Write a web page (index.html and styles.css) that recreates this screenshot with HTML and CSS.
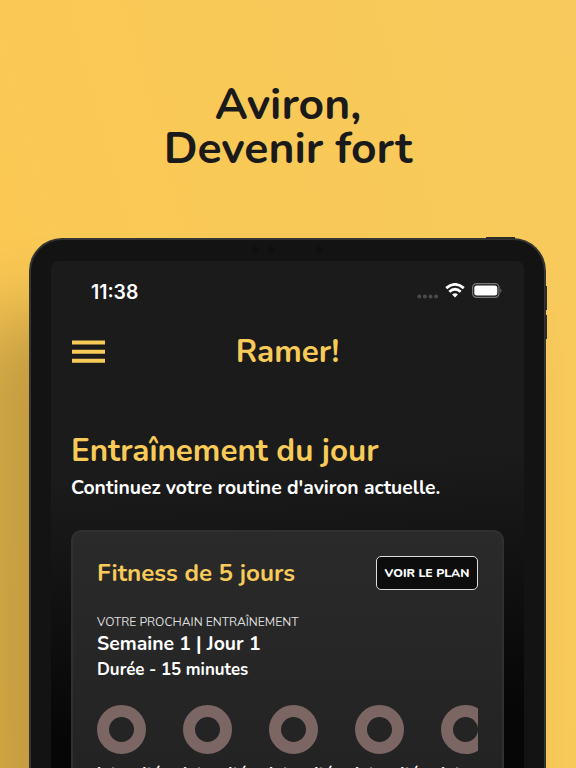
FILE: index.html
```html
<!DOCTYPE html>
<html lang="fr">
<head>
  <meta charset="UTF-8" />
  <meta name="viewport" content="width=device-width, initial-scale=1" />
  <title>Ramer! - Aviron, Devenir fort</title>
  <link rel="stylesheet" href="styles.css">
</head>
<body>
  <h1 class="headline">Aviron,<br>Devenir fort</h1>

  <div class="tablet">
    <span class="key key-power"></span>
    <span class="key key-up"></span>
    <span class="key key-down"></span>
    <span class="sensors"><i></i><i></i><i></i></span>

    <div class="screen">
      <div class="status">
        <span class="time">11:38</span>
        <div class="status-icons">
          <svg class="dots" width="22" height="5" viewBox="0 0 22 5">
            <circle cx="2.3" cy="2.5" r="2" /><circle cx="7.9" cy="2.5" r="2" /><circle cx="13.5" cy="2.5" r="2" /><circle cx="19.1" cy="2.5" r="2" />
          </svg>
          <svg class="wifi" width="20" height="15" viewBox="0 0 20 15">
            <path d="M1.2 5.1 Q10 -2.3 18.8 5.1" />
            <path d="M4.3 8.7 Q10 3.8 15.7 8.7" />
            <path class="wifi-dot" d="M7.1 11.4 Q10 9 12.9 11.4 L10 14.6 Z" />
          </svg>
          <svg class="battery" width="31" height="15" viewBox="0 0 31 15">
            <rect class="battery-case" x=".6" y=".6" width="26.4" height="13.8" rx="4" />
            <rect class="battery-fill" x="2.3" y="2.4" width="23" height="10.2" rx="2.5" />
            <path class="battery-tip" d="M28.4 5.2 Q30.6 7.5 28.4 9.8 Z" />
          </svg>
        </div>
      </div>

      <header>
        <svg class="menu" width="33" height="23" viewBox="0 0 33 23">
          <path d="M0 2.5H33M0 11.7H33M0 20.8H33" />
        </svg>
        <span class="brand">Ramer!</span>
      </header>

      <main>
        <h2>Entraînement du jour</h2>
        <p class="intro">Continuez votre routine d'aviron actuelle.</p>

        <section class="card">
          <div class="card-head">
            <h3>Fitness de 5 jours</h3>
            <button type="button">VOIR LE PLAN</button>
          </div>
          <p class="next">VOTRE PROCHAIN ENTRAÎNEMENT</p>
          <p class="session">Semaine 1 | Jour 1</p>
          <p class="duration">Durée - 15 minutes</p>
          <div class="steps">
            <div class="step"><span class="ring"></span><span class="step-label">intensité</span></div>
            <div class="step"><span class="ring"></span><span class="step-label">intensité</span></div>
            <div class="step"><span class="ring"></span><span class="step-label">intensité</span></div>
            <div class="step"><span class="ring"></span><span class="step-label">intensité</span></div>
            <div class="step"><span class="ring"></span><span class="step-label">intensité</span></div>
          </div>
        </section>
      </main>
    </div>
  </div>
</body>
</html>
```

FILE: styles.css
```css
:root {
  --yellow: #f8cb59;
  --ink: #1a1a1a;
  --white: #ffffff;
  --ring: #7b6664;
}
* {
  box-sizing: border-box;
}
body {
  margin: 0;
  height: 768px;
  overflow: hidden;
  font-family: Nunito, 'Open Sans', sans-serif;
  font-weight: 700;
  color: var(--white);
  background: linear-gradient(75deg, #fcc852, #f6ca5c);
}
h1, h2, h3, p {
  margin: 0;
}
.headline {
  height: 238px;
  padding-top: 83px;
  text-align: center;
  font-size: 44.5px;
  line-height: 43.5px;
  font-weight: 700;
  color: var(--ink);
  white-space: nowrap;
}
.tablet {
  position: relative;
  width: 517px;
  height: 530px;
  margin-left: 29px;
  padding: 21px 20px 0;
  border: 2px solid #343532;
  border-bottom: 0;
  border-radius: 33px 33px 0 0;
  background: #131313;
  box-shadow: -60px 78px 80px 0 rgba(0, 0, 0, 0.23);
}
.key {
  position: absolute;
  background: #292a29;
}
.key-power {
  top: -3px;
  right: 29px;
  width: 29px;
  height: 2px;
}
.key-up,
.key-down {
  right: -3px;
  width: 2px;
  height: 24px;
}
.key-up {
  top: 46px;
}
.key-down {
  top: 75px;
}
.sensors {
  position: absolute;
  top: 6px;
  left: 220px;
  display: flex;
  gap: 8px;
}
.sensors i {
  width: 8px;
  height: 8px;
  border-radius: 50%;
  background: #101010;
}
.sensors i:last-child {
  margin-left: 32px;
}
.screen {
  height: 507px;
  padding: 0 20px;
  border-radius: 8px 8px 0 0;
  background: linear-gradient(176deg, #1b1b1b 0, #1b1b1b 220px, #060606 480px);
}
.status {
  display: flex;
  justify-content: space-between;
  height: 60px;
  padding: 18px 1px 0 20px;
}
.time {
  padding-top: 1px;
  font-family: Inter, sans-serif;
  font-size: 19.4px;
  line-height: 25px;
  font-weight: 600;
}
.status-icons {
  display: flex;
  padding-top: 4px;
}
.dots {
  margin: 11px 6px 0 0;
  fill: #4b4b4b;
}
.wifi {
  margin-right: 7px;
  fill: none;
  stroke: var(--white);
  stroke-width: 2.8;
}
.wifi .wifi-dot {
  fill: var(--white);
  stroke: none;
}
.battery-case {
  fill: none;
  stroke: #777;
  stroke-width: 1.2;
}
.battery-fill {
  fill: var(--white);
}
.battery-tip {
  fill: #777;
}
header {
  display: grid;
  grid-template-columns: 33px 1fr 33px;
  align-items: center;
  height: 60px;
  padding: 0 1px;
}
.menu {
  stroke: var(--yellow);
  stroke-width: 4;
}
.brand {
  padding-top: 1px;
  text-align: center;
  font-size: 31.4px;
  line-height: 40px;
  color: var(--yellow);
}
main {
  padding-top: 48px;
  white-space: nowrap;
}
h2 {
  padding-top: 1px;
  font-size: 31.4px;
  line-height: 41px;
  color: var(--yellow);
}
.intro {
  height: 58px;
  padding-top: 3px;
  font-size: 19.35px;
  line-height: 28px;
}
.card {
  height: 239px;
  margin-top: 1px;
  padding: 24px 24px 0;
  border: 2px solid #303030;
  border-bottom: 0;
  border-radius: 10px 10px 0 0;
  background: linear-gradient(#2a2a2a, #232323);
  overflow: hidden;
}
.card-head {
  display: flex;
  justify-content: space-between;
  height: 34px;
}
h3 {
  padding-top: 1px;
  font-size: 24.2px;
  line-height: 34px;
  color: var(--yellow);
}
button {
  width: 102px;
  height: 34px;
  padding: 0;
  border: 1.5px solid #ddd;
  border-radius: 5px;
  background: #0d0d0d;
  font-family: inherit;
  font-size: 12.2px;
  font-weight: 800;
  color: var(--white);
}
.next {
  margin-top: 23px;
  font-size: 12.1px;
  line-height: 18px;
  font-weight: 400;
  color: #ddd;
}
.session {
  font-size: 19.35px;
  line-height: 26px;
}
.duration {
  padding-top: 1px;
  font-size: 16.9px;
  line-height: 24px;
}
.steps {
  display: flex;
  gap: 37px;
  margin-top: 23px;
  overflow: hidden;
}
.step {
  flex: none;
  width: 49px;
}
.ring {
  display: block;
  width: 49px;
  height: 49px;
  border: 12px solid var(--ring);
  border-radius: 50%;
}
.step-label {
  display: block;
  margin-top: 7px;
  font-size: 16px;
  line-height: 24px;
}
```
